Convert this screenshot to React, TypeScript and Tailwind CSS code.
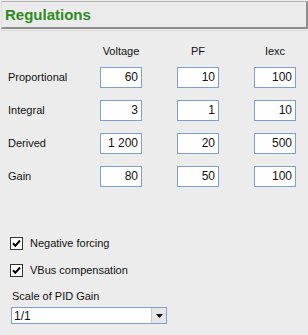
import React from "react";

const rows = [
  { label: "Proportional", values: ["60", "10", "100"] },
  { label: "Integral", values: ["3", "1", "10"] },
  { label: "Derived", values: ["1 200", "20", "500"] },
  { label: "Gain", values: ["80", "50", "100"] },
];

const NumBox = ({ value }: { value: string }) => (
  <div className="w-[42px] h-[21px] bg-white border border-[#7aa0d8] flex items-center justify-end pr-[3px] text-[12px] text-[#111]">
    {value}
  </div>
);

const CheckRow = ({ label }: { label: string }) => (
  <div className="flex items-center h-[14px]">
    <div className="w-[13px] h-[13px] bg-white border border-[#333333] flex items-center justify-center">
      <svg width="9" height="9" viewBox="0 0 9 9">
        <path d="M1 4.3 L3.3 6.8 L8 1.5" fill="none" stroke="#000" strokeWidth="2" />
      </svg>
    </div>
    <span className="ml-[7px] text-[11px] text-[#111]">{label}</span>
  </div>
);

export default function App() {
  return (
    <div
      className="w-[308px] h-[335px] bg-[#ececec] overflow-hidden"
      style={{ fontFamily: '"Liberation Sans", Arial, sans-serif' }}
    >
      <div className="pt-[1px] pl-[1px]">
        <div className="h-[28px] bg-[#ebebeb] border-t border-l border-t-[#b4b4b4] border-l-[#dcdcdc] border-r-2 border-r-[#8e8e8e] border-b-2 border-b-[#8e8e8e] flex items-center pl-[3px]">
          <span className="text-[15px] font-bold text-[#2f8a1f] leading-none">Regulations</span>
        </div>
        <div className="h-[1px] mt-[1px] bg-[#dadada]" />
      </div>

      <div className="grid grid-cols-[100px_77px_77px_42px] mt-[12px] text-[11px] text-[#111]">
        <div />
        <div className="w-[42px] text-center">Voltage</div>
        <div className="w-[42px] text-center">PF</div>
        <div className="w-[42px] text-center">Iexc</div>
      </div>

      <div className="flex flex-col gap-[12px] mt-[7px]">
        {rows.map((r) => (
          <div key={r.label} className="grid grid-cols-[100px_77px_77px_42px] items-center">
            <span className="pl-[8px] text-[11px] text-[#111]">{r.label}</span>
            {r.values.map((v, i) => (
              <NumBox key={i} value={v} />
            ))}
          </div>
        ))}
      </div>

      <div className="flex flex-col gap-[13px] pl-[10px] mt-[50px]">
        <CheckRow label="Negative forcing" />
        <CheckRow label="VBus compensation" />
      </div>

      <div className="pl-[12px] mt-[10px] text-[11px] text-[#111]">Scale of PID Gain</div>

      <div className="ml-[11px] mt-[3px] w-[156px] h-[17px] bg-white border border-[#7aa0d8] flex items-center">
        <span className="flex-1 pl-[2px] text-[12px] text-[#111] leading-none">1/1</span>
        <div className="w-[15px] h-[15px] bg-[#e6e6e6] border-l border-[#c8c8c8] flex items-center justify-center">
          <svg width="7" height="4" viewBox="0 0 7 4">
            <path d="M0 0 H7 L3.5 4 Z" fill="#111" />
          </svg>
        </div>
      </div>
    </div>
  );
}
